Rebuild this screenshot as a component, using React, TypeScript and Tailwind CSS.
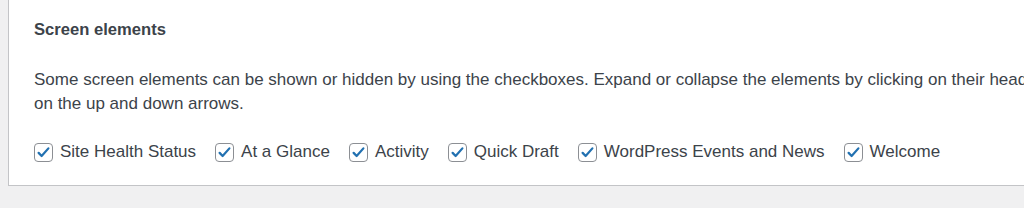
const items = ['Site Health Status', 'At a Glance', 'Activity', 'Quick Draft', 'WordPress Events and News', 'Welcome']

function CheckBox() {
  return (
    <span className="w-[19px] h-[19px] shrink-0 rounded-[4px] border border-[#8c8f94] bg-white flex items-center justify-center">
      <svg width="15" height="15" viewBox="0 0 20 20">
        <path d="M3.5 10.5l4 4.2L16.5 4.5" fill="none" stroke="#2271b1" strokeWidth="3" strokeLinecap="round" strokeLinejoin="round" />
      </svg>
    </span>
  )
}

export default function App() {
  return (
    <div className="w-[1024px] h-[208px] overflow-hidden bg-[#f0f0f1]" style={{ fontFamily: '"Liberation Sans", Arial, sans-serif' }}>
      <div className="ml-[8px] w-[1400px] h-[186px] bg-white border-l border-b border-[#c3c4c7] pl-[25px] pt-[18px]">
        <h2 className="text-[16.6px] leading-[24px] font-bold text-[#3c434a]">Screen elements</h2>
        <p className="mt-[26px] text-[17px] leading-[24px] text-[#3c434a] whitespace-nowrap">
          Some screen elements can be shown or hidden by using the checkboxes. Expand or collapse the elements by clicking on their headings, and arrange them by dragging their headings or by clicking
          <br />
          on the up and down arrows.
        </p>
        <div className="mt-[24px] flex items-center gap-[19px] h-[24px]">
          {items.map((label) => (
            <label key={label} className="flex items-center gap-[7px] text-[17px] text-[#3c434a] whitespace-nowrap">
              <CheckBox />
              {label}
            </label>
          ))}
        </div>
      </div>
    </div>
  )
}
